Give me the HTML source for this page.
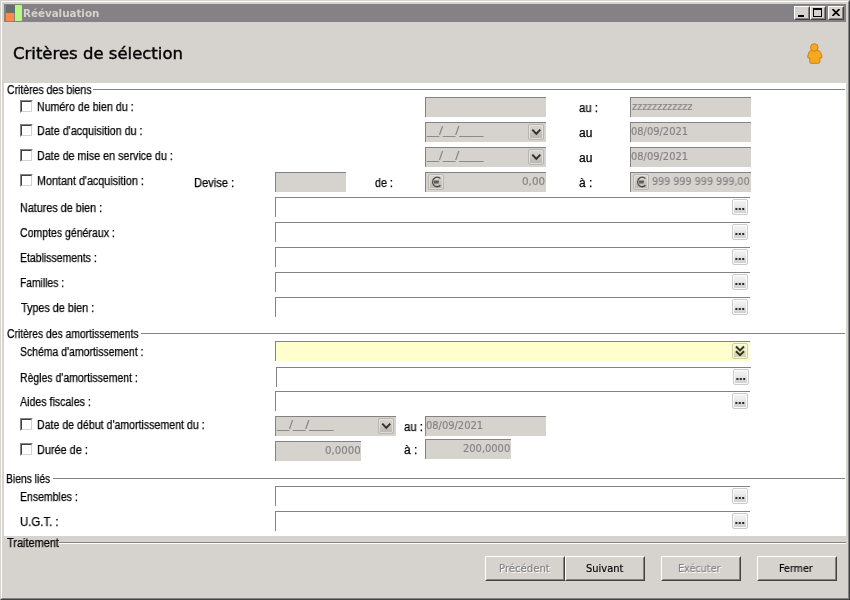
<!DOCTYPE html>
<html><head><meta charset="utf-8"><title>Réévaluation</title>
<style>
*{box-sizing:border-box;margin:0;padding:0}
html,body{width:850px;height:600px;overflow:hidden;background:#d6d3ce}
body{position:relative;font-family:"Liberation Sans",sans-serif;font-size:11px;color:#000}
.a{position:absolute}
.t{position:absolute;white-space:nowrap;transform-origin:0 0;will-change:transform}
.m{font:12px/14px 'Liberation Sans',sans-serif}
.h{font:11px/13px 'DejaVu Sans Condensed','Liberation Sans',sans-serif}
.hb{font:bold 11px/13px 'DejaVu Sans Condensed','Liberation Sans',sans-serif}
.T{font:16.5px/20px 'DejaVu Sans','Liberation Sans',sans-serif}
.m{-webkit-text-stroke:.25px currentColor}
.T{-webkit-text-stroke:.4px currentColor}
.h{-webkit-text-stroke:.15px currentColor}

.f{position:absolute;height:20px;border:0 solid #848284;border-width:1px 0 0 1px;background:#d6d3ce}
.w{background:#fff}
.y{background:#ffffce}
.cb{position:absolute;width:13px;height:13px;background:#fff;border:1px solid #848284;border-right-color:#fff;border-bottom-color:#fff}
.cb:after{content:"";position:absolute;left:0;top:0;right:0;bottom:0;border:1px solid #424142;border-right-color:#d6d3ce;border-bottom-color:#d6d3ce}
.db{position:absolute;width:16px;height:16px;border-radius:2px;border:1px solid #cbcbcb;background:linear-gradient(#f5f5f5 0%,#ebebeb 40%,#dadada 65%,#cecece 100%);box-shadow:inset 0 0 0 1px rgba(255,255,255,.9)}
.f:not(.w) .db{border-color:#b9b6af;background:linear-gradient(#d9d6d1 0%,#cfccc6 40%,#c3c0b9 65%,#bab7b0 100%);box-shadow:inset 0 0 0 1px rgba(232,230,225,.75)}
.f.y .db{border-color:#cfcf9f;background:linear-gradient(#f6f6d2 0%,#ecebc8 45%,#dddcbb 55%,#d2d1b2 100%);box-shadow:inset 0 0 0 1px rgba(255,255,235,.85)}
.db svg{position:absolute;left:-1px;top:-1px}
.hl{position:absolute;height:1px;background:#848284}
.btn{position:absolute;width:80px;height:25px;top:556px;background:#d6d3ce;border:1px solid #fff;border-right-color:#424142;border-bottom-color:#424142}
.btn:after{content:"";position:absolute;left:0;top:0;right:0;bottom:0;border:1px solid #d6d3ce;border-right-color:#848284;border-bottom-color:#848284}
.tb{position:absolute;top:6px;width:16px;height:14px;background:#d6d3ce;border:1px solid #fff;border-right-color:#424142;border-bottom-color:#424142}
.tb:after{content:"";position:absolute;left:0;top:0;right:0;bottom:0;border:1px solid #d6d3ce;border-right-color:#848284;border-bottom-color:#848284}
</style></head><body>
<svg width="0" height="0" style="position:absolute"><defs>
<g id="dots"><rect x="3.4" y="9" width="2" height="2" fill="#2a2a2a"/><rect x="6.8" y="9" width="2" height="2" fill="#2a2a2a"/><rect x="10.2" y="9" width="2" height="2" fill="#2a2a2a"/></g>
<path id="chev" d="M4.3 5.6L8.3 9.9L12.3 5.600" fill="none" stroke="#2e2e2e" stroke-width="1.9"/>
<g id="chev2" fill="none" stroke="#33331c" stroke-width="1.9"><path d="M4 3.500L8 7.400L12 3.500"/><path d="M4 8.300L8 12.200L12 8.300"/></g>
<g id="euro" fill="none"><path d="M12.400 4.600A4.500 4.800 0 1 0 12.400 11.300" stroke="#454545" stroke-width="1.300"/><path d="M5.800 7.200H11M5.800 8.800H10.700" stroke="#5c5c5c" stroke-width="1.400"/></g>
</defs></svg>
<!-- frame -->
<div class="a" style="left:0;top:0;width:850px;height:600px;border:1px solid #d6d3ce;border-right-color:#424142;border-bottom-color:#424142"></div>
<div class="a" style="left:1px;top:1px;width:848px;height:598px;border:1px solid #fff;border-right-color:#848284;border-bottom-color:#848284"></div>
<!-- title bar -->
<div class="a" style="left:4px;top:4px;width:842px;height:18px;background:#848284"></div>
<div class="a" style="left:6px;top:5px;width:9px;height:8px;background:#6b6e6a"></div>
<div class="a" style="left:6px;top:13px;width:8px;height:8px;background:#fa8a4c"></div>
<div class="a" style="left:15px;top:5px;width:7px;height:16px;background:#b4f984"></div>
<div class="tb" style="left:794px"><div class="a" style="left:3px;top:8px;width:6px;height:2px;background:#000"></div></div>
<div class="tb" style="left:810px"><div class="a" style="left:2px;top:1px;width:9px;height:9px;border:1px solid #000;border-top-width:2px"></div></div>
<div class="tb" style="left:828px"><svg class="a" style="left:3px;top:2px" width="8" height="7" viewBox="0 0 8 7"><path d="M0.5 0L7.5 7M7.5 0L0.5 7" stroke="#000" stroke-width="1.6" fill="none"/></svg></div>
<!-- header icon -->
<svg class="a" style="left:806px;top:42px" width="18" height="23" viewBox="0 0 18 23"><g fill="#f7a81f" stroke="#c9821c" stroke-width="1"><path d="M5.500 8.500 L11.500 8.500 Q14 8.600 14.600 10.500 L16 14.500 L15.500 16 L13.800 15.800 L13.800 20 Q13.800 21.300 12.500 21.300 L5 21.300 Q3.800 21.300 3.800 20 L3.800 15.800 L2 16 L1.600 14.500 L2.800 10.500 Q3.300 8.600 5.500 8.500 Z"/><circle cx="8.300" cy="5.500" r="3.800"/></g></svg>
<!-- white panel -->
<div class="a w" style="left:4px;top:83px;width:842px;height:453px"></div>
<!-- separators -->
<div class="hl" style="left:93px;top:89px;width:752px"></div>
<div class="hl" style="left:141px;top:333px;width:704px"></div>
<div class="hl" style="left:53px;top:478px;width:792px"></div>
<div class="hl" style="left:59px;top:542px;width:787px"></div>
<div class="hl" style="left:59px;top:543px;width:787px;background:#fff"></div>
<!-- checkboxes -->
<div class="cb" style="left:20px;top:100px"></div>
<div class="cb" style="left:20px;top:124px"></div>
<div class="cb" style="left:20px;top:149px"></div>
<div class="cb" style="left:20px;top:174px"></div>
<div class="cb" style="left:20px;top:418px"></div>
<div class="cb" style="left:20px;top:443px"></div>
<!-- fields group 1 -->
<div class="f" style="left:425px;top:97px;width:121px"></div>
<div class="f" style="left:425px;top:122px;width:121px"><div class="db" style="left:102px;top:1px"><svg width="16" height="16"><use href="#chev"/></svg></div></div>
<div class="f" style="left:425px;top:147px;width:121px"><div class="db" style="left:102px;top:1px"><svg width="16" height="16"><use href="#chev"/></svg></div></div>
<div class="f" style="left:275px;top:172px;width:71px"></div>
<div class="f" style="left:425px;top:172px;width:121px"><div class="db" style="left:2px;top:1px"><svg width="16" height="16"><use href="#euro"/></svg></div></div>
<div class="f" style="left:630px;top:97px;width:121px"></div>
<div class="f" style="left:630px;top:122px;width:121px"></div>
<div class="f" style="left:630px;top:147px;width:121px"></div>
<div class="f" style="left:630px;top:172px;width:121px"><div class="db" style="left:2px;top:1px"><svg width="16" height="16"><use href="#euro"/></svg></div></div>
<div class="f w" style="left:275px;top:197px;width:475px"><div class="db" style="left:456px;top:1px"><svg width="16" height="16"><use href="#dots"/></svg></div></div>
<div class="f w" style="left:275px;top:222px;width:475px"><div class="db" style="left:456px;top:1px"><svg width="16" height="16"><use href="#dots"/></svg></div></div>
<div class="f w" style="left:275px;top:247px;width:475px"><div class="db" style="left:456px;top:1px"><svg width="16" height="16"><use href="#dots"/></svg></div></div>
<div class="f w" style="left:275px;top:272px;width:475px"><div class="db" style="left:456px;top:1px"><svg width="16" height="16"><use href="#dots"/></svg></div></div>
<div class="f w" style="left:275px;top:297px;width:475px"><div class="db" style="left:456px;top:1px"><svg width="16" height="16"><use href="#dots"/></svg></div></div>
<!-- fields group 2 -->
<div class="f y" style="left:275px;top:341px;width:475px"><div class="db" style="left:456px;top:1px"><svg width="16" height="16"><use href="#chev2"/></svg></div></div>
<div class="f w" style="left:276px;top:367px;width:475px"><div class="db" style="left:456px;top:1px"><svg width="16" height="16"><use href="#dots"/></svg></div></div>
<div class="f w" style="left:275px;top:391px;width:475px"><div class="db" style="left:456px;top:1px"><svg width="16" height="16"><use href="#dots"/></svg></div></div>
<div class="f" style="left:275px;top:416px;width:121px"><div class="db" style="left:102px;top:1px"><svg width="16" height="16"><use href="#chev"/></svg></div></div>
<div class="f" style="left:275px;top:441px;width:86px"></div>
<div class="f" style="left:425px;top:416px;width:121px"></div>
<div class="f" style="left:425px;top:439px;width:86px"></div>
<!-- fields group 3 -->
<div class="f w" style="left:275px;top:486px;width:475px"><div class="db" style="left:456px;top:1px"><svg width="16" height="16"><use href="#dots"/></svg></div></div>
<div class="f w" style="left:275px;top:511px;width:475px"><div class="db" style="left:456px;top:1px"><svg width="16" height="16"><use href="#dots"/></svg></div></div>
<!-- buttons -->
<div class="btn" style="left:485px"></div>
<div class="btn" style="left:565px"></div>
<div class="btn" style="left:661px"></div>
<div class="btn" style="left:757px"></div>
<!-- texts -->
<div class="t hb" style="left:22.96px;top:7px;transform:scaleX(1.0417);color:#d6d3ce">Réévaluation</div>
<div class="t T" style="left:13.00px;top:44px;transform:scaleX(1.0000)">Critères de sélection</div>
<div class="t m" style="left:7.13px;top:83px;transform:scaleX(0.8737)">Critères des biens</div>
<div class="t m" style="left:37.11px;top:100px;transform:scaleX(0.8879)">Numéro de bien du :</div>
<div class="t m" style="left:37.10px;top:124px;transform:scaleX(0.8966)">Date d'acquisition du :</div>
<div class="t m" style="left:37.11px;top:149px;transform:scaleX(0.8933)">Date de mise en service du :</div>
<div class="t m" style="left:37.10px;top:174px;transform:scaleX(0.8974)">Montant d'acquisition :</div>
<div class="t m" style="left:194.07px;top:176px;transform:scaleX(0.9268)">Devise :</div>
<div class="t m" style="left:375.00px;top:176px;transform:scaleX(0.8947)">de :</div>
<div class="t m" style="left:579.06px;top:101px;transform:scaleX(0.9444)">au :</div>
<div class="t m" style="left:579.00px;top:126px;transform:scaleX(1.0000)">au</div>
<div class="t m" style="left:579.00px;top:151px;transform:scaleX(1.0000)">au</div>
<div class="t m" style="left:579.00px;top:176px;transform:scaleX(1.0000)">à :</div>
<div class="t m" style="left:20.10px;top:201px;transform:scaleX(0.8989)">Natures de bien :</div>
<div class="t m" style="left:20.12px;top:226px;transform:scaleX(0.8774)">Comptes généraux :</div>
<div class="t m" style="left:20.13px;top:251px;transform:scaleX(0.8721)">Etablissements :</div>
<div class="t m" style="left:20.14px;top:276px;transform:scaleX(0.8571)">Familles :</div>
<div class="t m" style="left:21.00px;top:301px;transform:scaleX(0.9000)">Types de bien :</div>
<div class="t m" style="left:7.14px;top:327px;transform:scaleX(0.8609)">Critères des amortissements</div>
<div class="t m" style="left:20.13px;top:345px;transform:scaleX(0.8714)">Schéma d'amortissement :</div>
<div class="t m" style="left:20.13px;top:371px;transform:scaleX(0.8722)">Règles d'amortissement :</div>
<div class="t m" style="left:20.00px;top:395px;transform:scaleX(0.8861)">Aides fiscales :</div>
<div class="t m" style="left:37.12px;top:418px;transform:scaleX(0.8830)">Date de début d'amortissement du :</div>
<div class="t m" style="left:37.09px;top:443px;transform:scaleX(0.9074)">Durée de :</div>
<div class="t m" style="left:404.06px;top:420px;transform:scaleX(0.9444)">au :</div>
<div class="t m" style="left:404.00px;top:443px;transform:scaleX(1.0000)">à :</div>
<div class="t m" style="left:6.14px;top:472px;transform:scaleX(0.8600)">Biens liés</div>
<div class="t m" style="left:20.12px;top:490px;transform:scaleX(0.8750)">Ensembles :</div>
<div class="t m" style="left:20.05px;top:515px;transform:scaleX(0.9487)">U.G.T. :</div>
<div class="t m" style="left:7.00px;top:536px;transform:scaleX(0.9123)">Traitement</div>
<div class="t h" style="left:632.00px;top:100px;transform:scaleX(0.9677);color:#848284">zzzzzzzzzzzz</div>
<div class="t h" style="left:631.00px;top:125px;transform:scaleX(1.0000);color:#848284">08/09/2021</div>
<div class="t h" style="left:631.00px;top:150px;transform:scaleX(1.0000);color:#848284">08/09/2021</div>
<div class="t h" style="left:652.03px;top:175px;transform:scaleX(0.9697);color:#848284">999 999 999 999,00</div>
<div class="t h" style="left:521.95px;top:175px;transform:scaleX(1.0476);color:#848284">0,00</div>
<div class="t h" style="left:427.00px;top:124px;transform:scaleX(1.2174);color:#848284">__/__/____</div>
<div class="t h" style="left:427.00px;top:149px;transform:scaleX(1.2174);color:#848284">__/__/____</div>
<div class="t h" style="left:277.00px;top:418px;transform:scaleX(1.2174);color:#848284">__/__/____</div>
<div class="t h" style="left:426.00px;top:419px;transform:scaleX(1.0000);color:#848284">08/09/2021</div>
<div class="t h" style="left:324.97px;top:444px;transform:scaleX(1.0303);color:#848284">0,0000</div>
<div class="t h" style="left:463.00px;top:442px;transform:scaleX(1.0000);color:#848284">200,0000</div>
<div class="t h" style="left:498.98px;top:562px;transform:scaleX(1.0208);color:#848284;text-shadow:1px 1px 0 #fff">Précédent</div>
<div class="t h" style="left:586.00px;top:562px;transform:scaleX(1.0000)">Suivant</div>
<div class="t h" style="left:678.02px;top:562px;transform:scaleX(0.9767);color:#848284;text-shadow:1px 1px 0 #fff">Exécuter</div>
<div class="t h" style="left:779.03px;top:562px;transform:scaleX(0.9706)">Fermer</div>
</body></html>
